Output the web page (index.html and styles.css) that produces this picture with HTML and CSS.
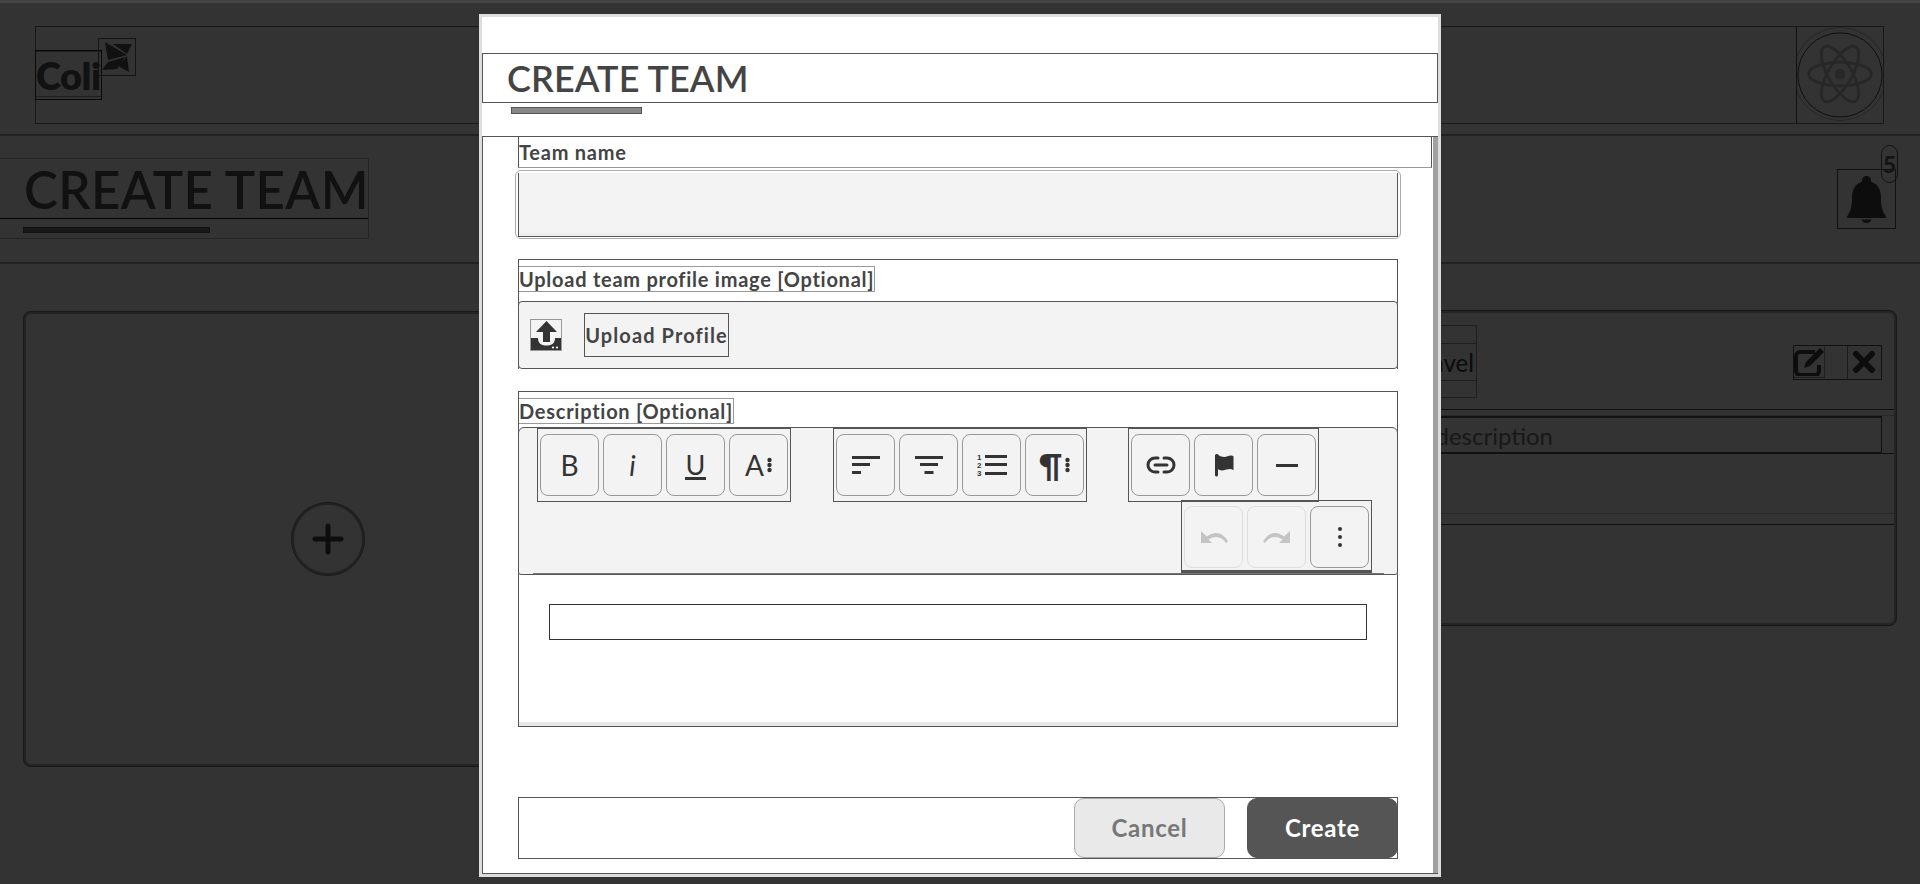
FILE: index.html
```html
<!DOCTYPE html>
<html lang="en">
<head>
<meta charset="utf-8">
<title>Create team</title>
<link rel="stylesheet" href="styles.css">
</head>
<body>
<div class="page">
  <header class="nav">
    <div class="nav-box">
      <div class="logo">
        <span class="logo-text"><span class="logo-word">Coli</span></span>
        <span class="logo-mark">
          <svg viewBox="0 0 37 37" width="37" height="37"><polygon points="7,4 29,17 10,22"/><polygon points="15,6 34,6 29,16"/><polygon points="4,32 10,24 27,19 19,31"/><polygon points="29,18 31,34 20,28"/></svg>
        </span>
      </div>
      <div class="avatar">
        <svg viewBox="0 0 86 97" width="86" height="95">
          <circle class="av-ring-l" cx="43" cy="48" r="47.5"/>
          <circle class="av-ring" cx="43" cy="49" r="43"/>
          <g class="atom"><ellipse cx="43" cy="48" rx="32" ry="12"/><ellipse cx="43" cy="48" rx="32" ry="12" transform="rotate(60 43 48)"/><ellipse cx="43" cy="48" rx="32" ry="12" transform="rotate(120 43 48)"/></g>
          <circle class="atom-dot" cx="43" cy="48" r="5.5"/>
        </svg>
      </div>
    </div>
  </header>
  <section class="page-head">
    <div class="title-box">
      <h1 class="page-title">CREATE TEAM</h1>
      <div class="title-rule"><span class="title-bar"></span></div>
    </div>
    <div class="bell-box">
      <svg viewBox="0 0 39 47" width="39" height="47"><path d="M19.5 0c2.600 0 4.500 1.900 4.500 4.300v1.400c6.800 2 10 8.300 10 15.300 0 9 1 14 5 19.500v1.500H0v-1.500C4 34.800 5 30 5 21 5 14 8.200 7.700 15 5.700V4.300C15 1.900 16.900 0 19.500 0z"/><path d="M14.500 43.500h10c-.8 2.200-2.700 3.500-5 3.500s-4.200-1.300-5-3.500z"/></svg>
      <span class="badge">5</span>
    </div>
  </section>
  <main class="cards">
    <div class="card-add">
      <span class="add-circle">
        <svg viewBox="0 0 32 32" width="32" height="32"><path d="M16 3v26M3 16h26"/></svg>
      </span>
    </div>
    <div class="card-team">
      <div class="team-top">
        <div class="team-name"><span class="team-name-text">Travel</span></div>
        <div class="team-actions">
          <span class="act act-edit"><svg viewBox="0 0 31 30" width="31" height="30"><path class="edit-frame" d="M21 6H6a4 4 0 0 0-4 4v15a4 4 0 0 0 4 4h15a4 4 0 0 0 4-4V19"/><path class="edit-pen" d="M12 16 26 2l4 4-14 14-6 2z"/></svg></span>
          <span class="act act-gap"></span>
          <span class="act act-close"><svg viewBox="0 0 24 24" width="24" height="24"><path d="M4 4l16 16M20 4 4 20"/></svg></span>
        </div>
      </div>
      <div class="team-desc"><div class="team-desc-box">Travel description</div></div>
      <div class="team-gap"></div>
      <div class="team-members"></div>
    </div>
  </main>
</div>

<div class="overlay">
  <div class="modal">
    <div class="modal-head"><h2 class="modal-title">CREATE TEAM</h2></div>
    <div class="modal-bar"></div>
    <div class="modal-body">
      <div class="form">
        <div class="name-label"><label class="lbl">Team name</label></div>
        <div class="ring"><div class="text-input"></div></div>

        <div class="section section-upload">
          <div class="sec-head"><span class="lbl lbl-box">Upload team profile image [Optional]</span></div>
          <div class="upload">
            <svg class="upload-ico" viewBox="0 0 32 32" width="32" height="32">
              <rect class="up-frame" x=".5" y=".5" width="31" height="31"/>
              <path d="M16.500 2 27 13H20V23H13V13H6Z"/>
              <path d="M1 19H8C8 24 11 26.500 16.500 26.500S25 24 25 19H31V31H1Z"/>
              <circle class="up-dot" cx="23" cy="28.500" r="1.100"/><circle class="up-dot" cx="27" cy="28.500" r="1.100"/>
            </svg>
            <span class="upload-btn">Upload Profile</span>
          </div>
        </div>

        <div class="section section-desc">
          <div class="sec-head sec-head-desc"><span class="lbl lbl-box">Description [Optional]</span></div>
          <div class="toolbar">
            <div class="tb-group">
              <button class="tb"><span class="g-b">B</span></button>
              <button class="tb"><span class="g-i">i</span></button>
              <button class="tb"><span class="g-u">U</span></button>
              <button class="tb"><span class="g-a">A</span><svg class="more" viewBox="0 0 5 16" width="5" height="16"><circle cx="2.500" cy="3" r="2.200"/><circle cx="2.500" cy="8" r="2.200"/><circle cx="2.500" cy="13" r="2.200"/></svg></button>
            </div>
            <div class="tb-group">
              <button class="tb"><svg viewBox="0 0 28 18" width="28" height="18"><rect y="0" width="28" height="3"/><rect y="7" width="18" height="3"/><rect y="15" width="9" height="3"/></svg></button>
              <button class="tb"><svg viewBox="0 0 28 18" width="28" height="18"><rect y="0" width="28" height="3"/><rect x="5" y="7" width="18" height="3"/><rect x="9.500" y="15" width="9" height="3"/></svg></button>
              <button class="tb"><svg viewBox="0 0 30 24" width="30" height="24"><text class="nums" x="0" y="7">1</text><text class="nums" x="0" y="15">2</text><text class="nums" x="0" y="23">3</text><rect x="8" y="2" width="22" height="3"/><rect x="8" y="10" width="22" height="3"/><rect x="8" y="19" width="22" height="3"/></svg></button>
              <button class="tb"><span class="g-p">¶</span><svg class="more" viewBox="0 0 5 16" width="5" height="16"><circle cx="2.500" cy="3" r="2.200"/><circle cx="2.500" cy="8" r="2.200"/><circle cx="2.500" cy="13" r="2.200"/></svg></button>
            </div>
            <div class="tb-group tb-group-link">
              <button class="tb"><svg class="ln" viewBox="0 0 30 18" width="30" height="18"><path d="M12 2H9a7 7 0 0 0 0 14h3M18 2h3a7 7 0 0 1 0 14h-3M9 9h12"/></svg></button>
              <button class="tb"><svg viewBox="0 0 22 24" width="22" height="24"><path d="M2 2c1-1.400 3-1.400 3.500 0 3 2.400 7 2.200 9 1.200 2-.8 5-1 6 .2v13.800c-2-1.600-4.500-1.600-7-.6-3 1.200-6 1-8.500-.4V22.500a1.700 1.700 0 0 1-3 0z"/></svg></button>
              <button class="tb"><svg viewBox="0 0 22 3" width="22" height="3"><rect width="22" height="3"/></svg></button>
            </div>
            <div class="tb-group tb-group-end">
              <button class="tb tb-off"><svg viewBox="0 0 28 14" width="28" height="14"><path d="M1 1v12h11l-3.500-3.500C11 7.800 13.500 7 16 7c4 0 7.500 2 10 6l2-1.500C25 6 20.500 3 16 3c-3.300 0-6.300 1.200-9 3.500z"/></svg></button>
              <button class="tb tb-off"><svg class="flip" viewBox="0 0 28 14" width="28" height="14"><path d="M1 1v12h11l-3.500-3.500C11 7.800 13.500 7 16 7c4 0 7.500 2 10 6l2-1.500C25 6 20.500 3 16 3c-3.300 0-6.300 1.200-9 3.500z"/></svg></button>
              <button class="tb"><svg viewBox="0 0 4 20" width="4" height="20"><circle cx="2" cy="2" r="2"/><circle cx="2" cy="10" r="2"/><circle cx="2" cy="18" r="2"/></svg></button>
            </div>
            <span class="tb-rule"></span>
          </div>
          <div class="editor">
            <div class="editor-line"></div>
          </div>
        </div>

        <div class="footer">
          <button class="btn btn-cancel">Cancel</button>
          <button class="btn btn-create">Create</button>
        </div>
      </div>
      <div class="scrollbar"></div>
    </div>
  </div>
</div>
</body>
</html>
```
FILE: styles.css
```css
* { box-sizing: border-box; }
html, body { margin: 0; height: 884px; overflow: hidden; }
body { background: #fff; font-family: Lato, "Open Sans", sans-serif; color: #555; position: relative; }

/* page behind the dialog */
.page { height: 884px; }
.nav { height: 136px; border-top: 14px solid #fff; padding: 12px 36px 0 35px; border-bottom: 2px solid #aaa; }
.nav-box { height: 98px; border: 1px solid #777; display: flex; justify-content: space-between; }
.logo { display: flex; align-items: flex-start; }
.logo-text { margin-top: 23px; margin-left: -1px; width: 67px; height: 50px; border: 1px solid #333; }
.logo-word { font-weight: 800; font-size: 38px; color: #555; letter-spacing: -.5px; display: block; padding-top: 3px; line-height: 40px; height: 46px; border-top: 1px solid #999; border-bottom: 1px solid #999; }
.logo-mark { margin: 11px 0 0 -4px; width: 38px; height: 38px; border: 1px solid #666; }
.logo-mark svg { fill: #555; display: block; margin: -1px; }
.avatar { width: 87px; height: 96px; border-left: 1px solid #555; }
.avatar svg { display: block; fill: none; }
.av-ring { stroke: #444; stroke-width: 1; }
.av-ring-l { stroke: #bbb; stroke-width: 1; }
.atom ellipse { fill: none; stroke: #c4c4c4; stroke-width: 3; }
.atom-dot { fill: #c4c4c4; }

.page-head { height: 128px; padding: 22px 24px 0 0; display: flex; justify-content: space-between; align-items: flex-start; border-bottom: 2px solid #aaa; }
.title-box { width: 369px; height: 81px; border: 1px solid #bbb; border-left: 0; }
.page-title { margin: 0; height: 60px; padding-left: 24px; font-size: 51px; line-height: 62px; font-weight: 600; color: #555; border-bottom: 1px solid #111; letter-spacing: .4px; white-space: nowrap; }
.title-rule { padding: 8px 0 0 23px; }
.title-bar { display: block; width: 187px; height: 6px; background: #777; border: 1px solid #555; }
.bell-box { margin-top: 11px; width: 59px; height: 60px; border: 1px solid #555; padding: 6px 0 0 9px; position: relative; }
.bell-box svg { fill: #444; display: block; }
.badge { position: absolute; top: -25px; left: 43px; width: 17px; height: 38px; border: 1px solid #555; border-radius: 9px; font-weight: 900; font-size: 23px; line-height: 36px; text-align: center; color: #666; }

.cards { display: flex; justify-content: space-between; align-items: flex-start; padding: 47px 23px 0; }
.card-add { width: 610px; height: 456px; border: 3px solid #b4b4b4; outline: 1px solid #777; outline-offset: -1px; border-radius: 8px; display: flex; align-items: center; justify-content: center; }
.add-circle { width: 74px; height: 74px; border: 3px solid #aaa; outline: 1px solid #888; outline-offset: -1px; border-radius: 50%; display: flex; align-items: center; justify-content: center; }
.add-circle svg { fill: none; stroke: #444; stroke-width: 5; stroke-linecap: round; }
.card-team { width: 1240px; height: 316px; margin-top: -1px; border: 3px solid #b4b4b4; outline: 1px solid #777; outline-offset: -1px; border-radius: 8px; }
.team-top { height: 97px; border-bottom: 1px solid #555; display: flex; justify-content: space-between; align-items: flex-start; padding: 12px 12px 0 0; }
.team-name { width: 817px; height: 73px; border: 1px solid #999; padding: 17px 0; text-align: right; }
.team-name-text { display: block; height: 38px; border: 1px solid #999; border-width: 1px 0; font-size: 24px; font-weight: 500; line-height: 38px; color: #444; padding-right: 2px; }
.team-actions { margin-top: 20px; width: 89px; height: 35px; border: 1px solid #555; display: flex; }
.act { display: block; height: 33px; }
.act-edit { width: 31px; border-right: 1px solid #aaa; border-bottom: 1px solid #999; height: 32px; }
.act-edit svg { display: block; fill: none; }
.edit-frame { stroke: #444; stroke-width: 4; }
.edit-pen { fill: #444; }
.act-gap { width: 23px; border-right: 1px solid #888; }
.act-close { width: 33px; padding: 4px 0 0 4px; }
.act-close svg { stroke: #444; stroke-width: 6; stroke-linecap: round; fill: none; display: block; }
.team-desc { height: 39px; margin-top: 5px; padding: 0 12px 0 0; border-top: 1px solid #ccc; border-bottom: 1px solid #555; }
.team-desc-box { height: 37px; border: 1px solid #555; border-top-width: 2px; font-size: 24px; line-height: 36px; padding-right: 328px; text-align: right; color: #777; }
.team-gap { height: 60px; border-bottom: 1px solid #ccc; }
.team-members { height: 99px; margin-top: 10px; border-top: 1px solid #555; }

/* dim layer + dialog */
.overlay { position: absolute; inset: 3px 0 0; background: rgba(0,0,0,.8); }
.overlay::before { content: ""; position: absolute; left: 0; right: 0; top: -3px; height: 3px; background: #444; }
.modal { position: absolute; left: 479px; top: 11px; width: 962px; height: 863px; background: #fff; border: 3px solid #ddd; display: flex; flex-direction: column; }
.modal-head { margin-top: 36px; height: 50px; border: 1px solid #555; padding-left: 24px; }
.modal-title { margin: 0; font-size: 36px; line-height: 48px; font-weight: 600; color: #444; letter-spacing: .1px; white-space: nowrap; }
.modal-bar { margin: 4px 0 0 29px; width: 131px; height: 7px; background: #888; border: 1px solid #555; }
.modal-body { margin-top: 22px; flex: 1; min-height: 0; border: 1px solid #555; border-right: 0; display: flex; }
.form { flex: 1; min-width: 0; padding-left: 35px; }
.scrollbar { width: 5px; background: #a0a0a0; }
.lbl { font-size: 20px; font-weight: 700; color: #444; letter-spacing: .74px; line-height: 24px; }
.name-label { width: 914px; height: 31px; border: 1px solid #555; border-width: 0 1px 1px; border-bottom-color: #999; padding: 3px 0 0; }
.ring { margin: 2px 0 0 -3px; width: 886px; padding: 2px 2px 1px; border: 1px solid #aaa; border-radius: 6px; }
.text-input { height: 64px; background: #f3f3f3; border: 1px solid #555; border-top: 0; box-shadow: inset 0 -3px 0 #eee; }
.section { width: 880px; border: 1px solid #555; border-bottom: 0; }
.section-upload { margin-top: 20px; }
.sec-head { height: 41px; padding-top: 6px; }
.sec-head-desc { height: 35px; padding-top: 6px; }
.lbl-box { display: inline-block; height: 26px; border: 1px solid #999; border-left: 0; }
.upload { margin: 0 -1px; height: 68px; background: #f3f3f3; border: 1px solid #555; border-radius: 4px; display: flex; align-items: center; padding-left: 11px; }
.upload-ico { fill: #333; flex: none; }
.up-frame { fill: none; stroke: #999; stroke-width: 1; }
.up-dot { fill: #fff; }
.upload-btn { margin-left: 22px; width: 145px; height: 44px; border: 1px solid #555; font-size: 20px; font-weight: 700; letter-spacing: 1.100px; line-height: 43px; text-align: center; color: #444; white-space: nowrap; }
.section-desc { margin-top: 22px; }
.toolbar { position: relative; display: flex; flex-wrap: wrap; align-content: flex-start; column-gap: 42px; height: 148px; margin: 0 -1px 0; padding: 0 25px 0 18px; background: #f3f3f3; border: 1px solid #555; border-radius: 6px 6px 3px 3px; }
.tb-group { display: flex; gap: 4px; padding: 5px 2px 4px; border: 1px solid #555; height: 74px; }
.tb-group-link { margin-left: -1px; }
.tb-group-end { margin: -2px 0 0 auto; height: 73px; border-bottom-width: 3px; }
.tb { width: 59px; height: 62px; padding: 0; background: #f3f3f3; border: 1px solid #999; border-radius: 8px; color: #333; font-family: Lato, sans-serif; display: flex; align-items: center; justify-content: center; gap: 3px; }
.tb svg { fill: #333; display: block; }
.tb-off { border-color: #ddd; }
.tb-off svg { fill: #c4c4c4; }
.flip { transform: scaleX(-1); }
.ln { fill: none !important; stroke: #333; stroke-width: 3; stroke-linecap: round; }
.nums { font-size: 8px; font-weight: 700; font-family: "Liberation Sans", sans-serif; }
.g-b { font-size: 28px; }
.g-i { font-size: 28px; font-style: italic; }
.g-u { font-size: 27px; line-height: 27px; border-bottom: 3px solid #333; height: 29px; padding: 0 1px; }
.g-a { font-size: 28px; }
.g-p { font-size: 32px; font-weight: 700; }
.more { fill: #333; }
.tb-rule { position: absolute; left: 14px; right: 13px; bottom: 0; height: 1px; background: #777; }
.editor { background: #fff; height: 152px; padding: 29px 30px 0; border-bottom: 1px solid #555; box-shadow: inset 0 -4px 0 #e8e8e8; }
.editor-line { height: 36px; border: 1px solid #333; }
.footer { width: 880px; height: 62px; margin-top: 70px; border: 1px solid #555; display: flex; justify-content: flex-end; gap: 22px; }
.btn { width: 151px; height: 60px; border-radius: 10px; font-family: Lato, sans-serif; font-size: 24px; font-weight: 700; padding: 0 0 2px; letter-spacing: .7px; }
.btn-cancel { background: #e9e9e9; border: 1px solid #aaa; color: #777; }
.btn-create { background: #555; border: 1px solid #555; color: #fff; margin-right: -1px; }
```
